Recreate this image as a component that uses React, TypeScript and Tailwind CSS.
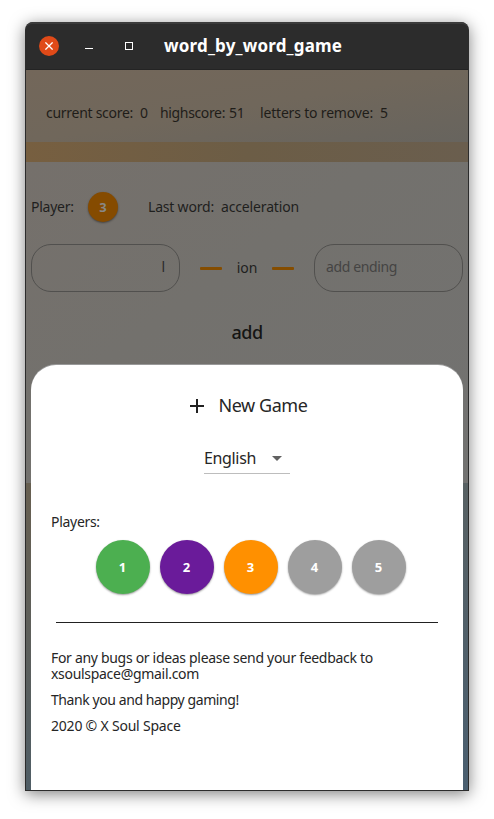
const players = [
  { id: 1, color: 'bg-[#4caf50]' },
  { id: 2, color: 'bg-[#6a1b9a]' },
  { id: 3, color: 'bg-[#ff9000]' },
  { id: 4, color: 'bg-[#9e9e9e]' },
  { id: 5, color: 'bg-[#9e9e9e]' },
];

function TitleBar() {
  return (
    <header className="flex h-12 shrink-0 items-center rounded-t-[7px] border-t-2 border-b border-t-[#3b3b3b] border-b-[#242424] bg-[#2c2c2c] pb-px pl-[13px]">
      <div className="flex size-5 items-center justify-center rounded-full bg-[#e04a18]">
        <svg width="8" height="8" viewBox="0 0 8 8" stroke="#fff" strokeWidth="1.3">
          <path d="M.4.4l7.2 7.2M7.6.4L.4 7.6" />
        </svg>
      </div>
      <div className="mt-[5px] ml-[26px] h-px w-2 bg-white" />
      <div className="ml-8 size-2 border border-white" />
      <h1 className="ml-[31px] text-[17px] leading-6 font-bold tracking-[0.18px] whitespace-nowrap text-white">
        word_by_word_game
      </h1>
    </header>
  );
}

function ScoreBar() {
  return (
    <div className="flex h-[72px] shrink-0 items-start bg-linear-to-br from-[#73675a] via-[#70675b] to-[#67645e] pt-[33px] pl-5 text-[14px] leading-5 text-[#1f1d19]">
      <span className="w-[94px] tracking-[-0.28px]">current score:</span>
      <span className="w-5">0</span>
      <span className="w-[69px] tracking-[-0.35px]">highscore:</span>
      <span className="w-[31px] tracking-[-0.2px]">51</span>
      <span className="w-[120px] tracking-[-0.18px]">letters to remove:</span>
      <span>5</span>
    </div>
  );
}

function Dash() {
  return <div className="h-[3px] w-[22px] rounded-[1px] bg-[#854d00]" />;
}

function GameBoard() {
  return (
    <div className="flex h-[321px] shrink-0 flex-col bg-linear-to-br from-[#75706b] via-[#73716d] via-40% to-[#727271] px-[5px] pt-[30px] text-[14px] text-[#1f1f1e]">
      <div className="flex h-[30px] items-center">
        <span className="w-[57px] pb-[2px] tracking-[-0.25px]">Player:</span>
        <span className="flex size-[30px] items-center justify-center rounded-full bg-[#854b00] pt-px text-[13px] font-bold text-[#898885] shadow-[0_1px_2px_#0006]">3</span>
        <span className="ml-[30px] w-[73px] pb-[2px] tracking-[-0.2px]">Last word:</span>
        <span className="pb-[2px] tracking-[-0.15px]">acceleration</span>
      </div>
      <div className="mt-[22px] flex h-12 items-center justify-between">
        <div className="flex h-12 w-[149px] items-center justify-end rounded-[20px] border border-[#51504e] pr-[14px] pb-[3px] text-[#2b2b2a]">l</div>
        <Dash />
        <span className="-mx-1.5 pb-[2px] tracking-[-0.1px]">ion</span>
        <Dash />
        <div className="flex h-12 w-[149px] items-center rounded-[20px] border border-[#51504e] pb-[3px] pl-[11px] tracking-[-0.38px] text-[#454443]">add ending</div>
      </div>
      <div className="mt-[28px] text-center text-[18px] leading-6 font-medium tracking-[-0.5px] text-[#151514]">add</div>
    </div>
  );
}

function NewGameSheet() {
  return (
    <section className="absolute inset-x-[5px] top-[295px] bottom-0 flex flex-col rounded-t-[25px] bg-white px-5 pt-[28px] text-[#262626] shadow-[0_-1px_0_#999]">
      <button className="mr-[2px] flex h-6 items-center self-center text-[18px] leading-6 tracking-[-0.45px]">
        <svg className="mt-px mr-[10px]" width="24" height="24" viewBox="0 0 24 24" fill="#212121">
          <path d="M19 13h-6v6h-2v-6H5v-2h6V5h2v6h6v2z" />
        </svg>
        New Game
      </button>
      <div className="mt-[26px] ml-[153px] flex h-[31px] w-[86px] items-start border-b border-[#bdbdbd] text-[16px] leading-[30px] tracking-[-0.35px]">
        <span className="w-[61px]">English</span>
        <svg className="mt-[3px]" width="24" height="24" viewBox="0 0 24 24" fill="#616161">
          <path d="M7 10l5 5 5-5z" />
        </svg>
      </div>
      <div className="mt-[38px] text-[14px] leading-5 tracking-[-0.3px]">Players:</div>
      <div className="mt-[8px] ml-[45px] flex gap-[10px]">
        {players.map((player) => (
          <div
            key={player.id}
            className={`flex size-[54px] items-center justify-center rounded-full pt-px pr-px text-[13px] font-bold text-white shadow-[0_1px_2px_#0006] ${player.color}`}
          >
            {player.id}
          </div>
        ))}
      </div>
      <div className="mx-[5px] mt-[28px] h-px bg-[#212121]" />
      <div className="mt-[27px] text-[14px] leading-4 whitespace-nowrap">
        <p className="tracking-[-0.31px]">For any bugs or ideas please send your feedback to</p>
        <p className="tracking-[-0.3px]">xsoulspace@gmail.com</p>
        <p className="mt-[10px] tracking-[-0.42px]">Thank you and happy gaming!</p>
        <p className="mt-[10px] tracking-[-0.21px]">2020 © X Soul Space</p>
      </div>
    </section>
  );
}

export default function App() {
  return (
    <main className="h-[819px] w-[494px] overflow-hidden bg-white px-[25px] pt-[22px] font-['Noto_Sans',sans-serif]">
      <div className="flex h-[769px] w-[444px] flex-col rounded-t-[8px] bg-[#2c2c2c] px-px pb-px shadow-[0_3px_16px_rgba(0,0,0,0.5)]">
        <TitleBar />
        <div className="relative flex min-h-0 flex-1 flex-col whitespace-nowrap">
          <ScoreBar />
          <div className="h-5 shrink-0 bg-linear-to-r from-[#775f40] via-[#6c5d46] to-[#6a5e4e]" />
          <GameBoard />
          <div className="flex flex-1 justify-between">
            <div className="w-[5px] bg-linear-to-b from-[#675f50] via-[#5d5f5b] to-[#4f5d65]" />
            <div className="w-[5px] bg-linear-to-b from-[#586163] to-[#4a5f70]" />
          </div>
          <NewGameSheet />
        </div>
      </div>
    </main>
  );
}
